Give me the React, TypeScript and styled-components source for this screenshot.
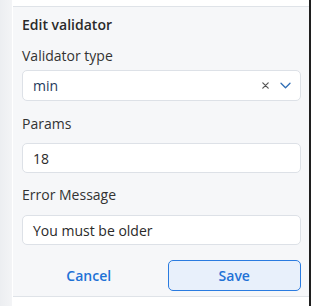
import React from 'react';
import styled, { createGlobalStyle } from 'styled-components';

const GlobalStyle = createGlobalStyle`
  html, body {
    margin: 0;
    padding: 0;
    background: #ffffff;
  }
  body {
    font-family: "Open Sans", "Noto Sans", sans-serif;
    -webkit-font-smoothing: antialiased;
  }
`;

const Page = styled.div`
  display: flex;
  width: 312px;
  height: 306px;
  overflow: hidden;
  background: #ffffff;
`;

const SideStrip = styled.div`
  width: 12px;
  flex-shrink: 0;
  background: linear-gradient(to right, #eceef1, #f3f4f6);
  border-right: 1px solid #ffffff;
`;

const Column = styled.div`
  display: flex;
  flex-direction: column;
  width: 296px;
  padding-top: 6px;
  border-right: 2px solid #1f1f1f;
`;

const Panel = styled.div`
  display: flex;
  flex-direction: column;
  height: 291px;
  box-sizing: border-box;
  padding: 8px 8px 0 9px;
  background: #f6f7f9;
  border-top: 1px solid #dfe3e8;
  border-bottom: 1px solid #dfe3e8;
`;

const Title = styled.div`
  font-size: 14px;
  font-weight: 600;
  line-height: 20px;
  color: #2a2a2a;
`;

const Field = styled.div<{ $top: number; $gap: number }>`
  display: flex;
  flex-direction: column;
  gap: ${(p) => p.$gap}px;
  margin-top: ${(p) => p.$top}px;
`;

const Label = styled.label`
  font-size: 14px;
  line-height: 20px;
  color: #333333;
`;

const Box = styled.div<{ $height: number }>`
  display: flex;
  align-items: center;
  height: ${(p) => p.$height}px;
  box-sizing: border-box;
  padding: 0 9px 0 10px;
  background: #ffffff;
  border: 1px solid #dde1e7;
  border-radius: 5px;
  font-size: 14px;
  color: #2a2a2a;
`;

const Value = styled.span<{ $tone?: string }>`
  flex: 1;
  color: ${(p) => p.$tone ?? '#2a2a2a'};
`;

const Icons = styled.div`
  display: flex;
  align-items: center;
  gap: 11px;
`;

const Actions = styled.div`
  display: grid;
  grid-template-columns: 1fr 1fr;
  gap: 12px;
  margin-top: 15px;
`;

const ActionButton = styled.button<{ $primary?: boolean }>`
  height: 31px;
  font-family: inherit;
  font-size: 14px;
  font-weight: 600;
  color: #1f72d6;
  background: ${(p) => (p.$primary ? '#e8f0fb' : 'transparent')};
  border: ${(p) => (p.$primary ? '1px solid #2a7be0' : '1px solid transparent')};
  border-radius: 5px;
  cursor: pointer;
`;

const ClearIcon = () => (
  <svg width="7" height="7" viewBox="0 0 7 7">
    <path d="M0.8 0.8 L6.2 6.2 M6.2 0.8 L0.8 6.2" stroke="#555" strokeWidth="1.2" strokeLinecap="round" />
  </svg>
);

const ChevronIcon = () => (
  <svg width="11" height="7" viewBox="0 0 11 7">
    <path d="M1 1.2 L5.5 5.8 L10 1.2" fill="none" stroke="#2f6db5" strokeWidth="1.3" strokeLinecap="round" strokeLinejoin="round" />
  </svg>
);

export default function App() {
  return (
    <>
      <GlobalStyle />
      <Page>
        <SideStrip />
        <Column>
          <Panel>
            <Title>Edit validator</Title>
            <Field $top={11} $gap={4}>
              <Label>Validator type</Label>
              <Box $height={31}>
                <Value $tone="#1e3a5c">min</Value>
                <Icons>
                  <ClearIcon />
                  <ChevronIcon />
                </Icons>
              </Box>
            </Field>
            <Field $top={13} $gap={9}>
              <Label>Params</Label>
              <Box $height={30}>
                <Value>18</Value>
              </Box>
            </Field>
            <Field $top={12} $gap={10}>
              <Label>Error Message</Label>
              <Box $height={30}>
                <Value>You must be older</Value>
              </Box>
            </Field>
            <Actions>
              <ActionButton>Cancel</ActionButton>
              <ActionButton $primary>Save</ActionButton>
            </Actions>
          </Panel>
        </Column>
      </Page>
    </>
  );
}
